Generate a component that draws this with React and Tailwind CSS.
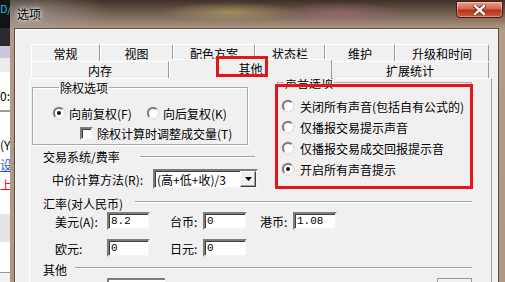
import React from "react";

const Radio = ({ checked }) => (
  <span className="w-[12px] h-[12px] shrink-0 rounded-full border-2 border-t-[#7c7c7c] border-l-[#7c7c7c] border-r-[#f4f4f4] border-b-[#f4f4f4] bg-white flex items-center justify-center shadow-[0_0_0_0.5px_#c8c8c8]">
    {checked && <span className="w-[4px] h-[4px] rounded-full bg-[#111]" />}
  </span>
);

const Checkbox = () => (
  <span className="w-[13px] h-[13px] shrink-0 border-2 border-t-[#7c7c7c] border-l-[#7c7c7c] border-r-[#f4f4f4] border-b-[#f4f4f4] bg-white shadow-[inset_1px_1px_0_#404040]" />
);

const Field = ({ value, w }) => (
  <div
    className={`${w} h-[18px] shrink-0 border-2 border-t-[#7c7c7c] border-l-[#7c7c7c] border-r-[#f4f4f4] border-b-[#f4f4f4] bg-white shadow-[inset_1px_1px_0_#404040] pl-[2px] flex items-center font-['Liberation_Mono',monospace] text-[11px]`}
  >
    {value}
  </div>
);

const Etched = ({ className }) => (
  <div className={`h-[2px] border-t border-t-[#a0a0a0] border-b border-b-white ${className}`} />
);

const rowOne = [
  ["常规", "w-[69px]"],
  ["视图", "w-[73px]"],
  ["配色方案", "w-[82px]"],
  ["状态栏", "w-[70px]"],
  ["维护", "w-[70px]"],
  ["升级和时间", "w-[94px]"],
];

const LeftStrip = () => (
  <div className="w-[10px] h-full shrink-0 flex flex-col overflow-hidden bg-white whitespace-nowrap">
    <div className="h-[28px] bg-[#111317] text-[#35b9d6] text-[11px] leading-[12px] pt-[2px]">D/</div>
    <div className="h-[18px] bg-[#2b2a31]" />
    <div className="h-[12px] bg-[#c9c8dc]" />
    <div className="h-[14px] bg-[#ececec]" />
    <div className="h-[38px] bg-white pt-[17px]">0:</div>
    <div className="h-[2px] bg-[#9a9a9a]" />
    <div className="h-[26px] bg-white" />
    <div className="h-[16px] bg-white">(Y</div>
    <div className="h-[4px] bg-white" />
    <div className="h-[16px] bg-white text-[#1a5fc0] underline">设</div>
    <div className="h-[4px] bg-white" />
    <div className="h-[16px] bg-white text-[#e01010]">上</div>
    <div className="h-[20px] bg-white" />
    <div className="h-[28px] bg-[#e4e4e4]" />
    <div className="h-[30px] bg-white" />
    <div className="h-[1px] bg-[#9a9a9a]" />
    <div className="flex-1 bg-[#f2f2f2]" />
  </div>
);

export default function App() {
  return (
    <div className="w-[505px] h-[282px] overflow-hidden relative flex bg-[#e8e8e8] font-['Noto_Sans_CJK_SC','Noto_Sans',sans-serif] text-[12px] leading-[13px] text-black">
      <LeftStrip />

      {/* dialog */}
      <div className="flex-1 flex flex-col pl-[5px] pr-[2px] bg-[radial-gradient(ellipse_70px_10px_at_220px_12px,rgba(205,190,110,0.5),transparent),radial-gradient(ellipse_60px_10px_at_330px_12px,rgba(180,110,140,0.45),transparent),radial-gradient(ellipse_80px_30px_at_20px_15px,rgba(170,165,160,0.6),transparent),linear-gradient(180deg,#3f3028_0px,#6e5a4c_12px,#9c8674_24px,#b29c89_30px,#ae9784_100%)]">
        {/* title bar */}
        <div className="h-[29px] shrink-0 flex items-start">
          <span className="ml-[2px] mt-[7px] text-[12px] leading-[14px] [text-shadow:0_0_6px_#fff,0_0_3px_#fff]">选项</span>
          <div className="ml-auto mt-[1px] w-[47px] h-[17px] rounded-b-[4px] border border-[#4a1a12] bg-[linear-gradient(180deg,#e9a08e_0%,#d2674f_45%,#b8301c_55%,#cf5a3c_100%)] shadow-[inset_0_0_0_1px_rgba(255,255,255,0.35)] flex items-center justify-center">
            <svg width="13" height="10" viewBox="0 0 13 10">
              <path d="M2 1 L11 9 M11 1 L2 9" stroke="#5a2418" strokeWidth="4" strokeLinecap="square" />
              <path d="M2 1 L11 9 M11 1 L2 9" stroke="#ffffff" strokeWidth="2.4" strokeLinecap="square" />
            </svg>
          </div>
        </div>

        {/* client area */}
        <div className="flex-1 min-h-0 mr-[5px] flex flex-col pl-[13px] pr-[5px] pt-[14px] bg-[#f0f0f0] border-l border-t border-white shadow-[0_0_0_1px_#5e4c40]">
          {/* tab row 1 */}
          <div className="ml-[2px] w-[458px] h-[17px] flex shrink-0">
            {rowOne.map(([t, w]) => (
              <div
                key={t}
                className={`${w} flex items-center justify-center border-t border-l border-white border-r border-r-[#9a9a9a] rounded-t-[2px]`}
              >
                {t}
              </div>
            ))}
          </div>
          {/* tab row 2 */}
          <div className="ml-[2px] w-[458px] h-[17px] flex shrink-0">
            <div className="w-[138px] flex items-center justify-center border-t border-l border-white border-r border-r-[#9a9a9a] rounded-t-[2px]">
              内存
            </div>
            <div className="w-[163px] h-[20px] -mt-[2px] relative z-10 flex items-center justify-center pb-[2px] bg-[#f0f0f0] border-t border-l border-white border-r border-r-[#9a9a9a] rounded-t-[2px]">
              其他
            </div>
            <div className="w-[157px] flex items-center justify-center border-t border-white border-r border-r-[#9a9a9a] rounded-t-[2px]">
              扩展统计
            </div>
          </div>

          {/* tab panel */}
          <div className="w-[463px] flex-1 min-h-0 border-t border-l border-white border-r border-r-[#9a9a9a] pl-[2px] flex flex-col">
            <div className="flex items-start">
              {/* left column */}
              <div className="w-[226px] flex flex-col">
                <fieldset className="mt-[2px] w-[216px] border border-[#a9a9a9] shadow-[inset_1px_1px_0_#fff,1px_1px_0_#fff] pt-[12px] pb-[4px] pl-[20px]">
                  <legend className="ml-[6px] px-[1px] leading-[13px]">除权选项</legend>
                  <div className="h-[14px] flex items-center">
                    <div className="w-[94px] flex items-center gap-[4px]">
                      <Radio checked />
                      <span className="whitespace-nowrap">向前复权(F)</span>
                    </div>
                    <div className="flex items-center gap-[4px]">
                      <Radio />
                      <span className="whitespace-nowrap">向后复权(K)</span>
                    </div>
                  </div>
                  <div className="mt-[6px] h-[14px] flex items-center ml-[27px] gap-[4px]">
                    <Checkbox />
                    <span className="whitespace-nowrap">除权计算时调整成交量(T)</span>
                  </div>
                </fieldset>

                <div className="mt-[5px] flex items-center">
                  <span className="ml-[11px] whitespace-nowrap">交易系统/费率</span>
                  <Etched className="flex-1 ml-[20px] mr-[3px]" />
                </div>

                <div className="mt-[6px] h-[20px] flex items-center">
                  <span className="ml-[20px] w-[101px] whitespace-nowrap">中价计算方法(R):</span>
                  <div className="w-[105px] h-[20px] border-2 border-t-[#7c7c7c] border-l-[#7c7c7c] border-r-[#f4f4f4] border-b-[#f4f4f4] bg-white shadow-[inset_1px_1px_0_#404040] flex items-center">
                    <span className="flex-1 pl-[2px] whitespace-nowrap">(高+低+收)/3</span>
                    <div className="w-[16px] h-[16px] bg-[#f0f0f0] border border-t-white border-l-white border-r-[#404040] border-b-[#404040] shadow-[inset_-1px_-1px_0_#a0a0a0] flex items-center justify-center">
                      <svg width="7" height="4" viewBox="0 0 7 4">
                        <path d="M0 0 H7 L3.5 4 Z" fill="#000" />
                      </svg>
                    </div>
                  </div>
                </div>
              </div>

              {/* right column */}
              <fieldset className="ml-[19px] -mt-[3px] w-[195px] border border-[#a9a9a9] pt-[10px] pb-[10px] pl-[4px]">
                <legend className="ml-[2px] px-[1px] leading-[13px]">声音选项</legend>
                <div className="flex flex-col gap-[7px]">
                  {[
                    ["关闭所有声音(包括自有公式的)", false],
                    ["仅播报交易提示声音", false],
                    ["仅播报交易成交回报提示音", false],
                    ["开启所有声音提示", true],
                  ].map(([t, c]) => (
                    <div key={t} className="h-[14px] flex items-center gap-[6px]">
                      <Radio checked={c} />
                      <span className="whitespace-nowrap">{t}</span>
                    </div>
                  ))}
                </div>
              </fieldset>
            </div>

            {/* exchange rates */}
            <div className="mt-[8px] w-[440px] flex items-start">
              <span className="ml-[11px] whitespace-nowrap">汇率(对人民币)</span>
              <Etched className="flex-1 ml-[12px] mt-[4px]" />
            </div>
            <div className="mt-[2px] h-[18px] flex items-center">
              <span className="ml-[23px] w-[52px] whitespace-nowrap">美元(A):</span>
              <Field value="8.2" w="w-[43px]" />
              <span className="ml-[20px] w-[33px]">台币:</span>
              <Field value="0" w="w-[44px]" />
              <span className="ml-[13px] w-[33px]">港币:</span>
              <Field value="1.08" w="w-[44px]" />
            </div>
            <div className="mt-[9px] h-[18px] flex items-center">
              <span className="ml-[23px] w-[52px]">欧元:</span>
              <Field value="0" w="w-[43px]" />
              <span className="ml-[20px] w-[33px]">日元:</span>
              <Field value="0" w="w-[44px]" />
            </div>

            {/* other */}
            <div className="mt-[6px] w-[440px] flex items-start">
              <span className="ml-[11px] whitespace-nowrap">其他</span>
              <Etched className="flex-1 ml-[8px] mt-[4px]" />
            </div>
            <div className="mt-[2px] flex">
              <div className="ml-[75px] w-[58px] h-[20px] border-t-2 border-l-2 border-t-[#7c7c7c] border-l-[#7c7c7c] bg-white" />
              <div className="ml-[272px] w-[35px] h-[20px] border border-[#9a9a9a] bg-[#f0f0f0]" />
            </div>
          </div>
        </div>
      </div>

      {/* red annotation boxes */}
      <div className="absolute z-20 left-[275px] top-[84px] w-[198px] h-[105px] border-[3px] border-[#e3161b] pointer-events-none" />
      <div className="absolute z-20 left-[216px] top-[56px] w-[52px] h-[21px] border-[3px] border-[#e3161b] pointer-events-none" />
    </div>
  );
}
